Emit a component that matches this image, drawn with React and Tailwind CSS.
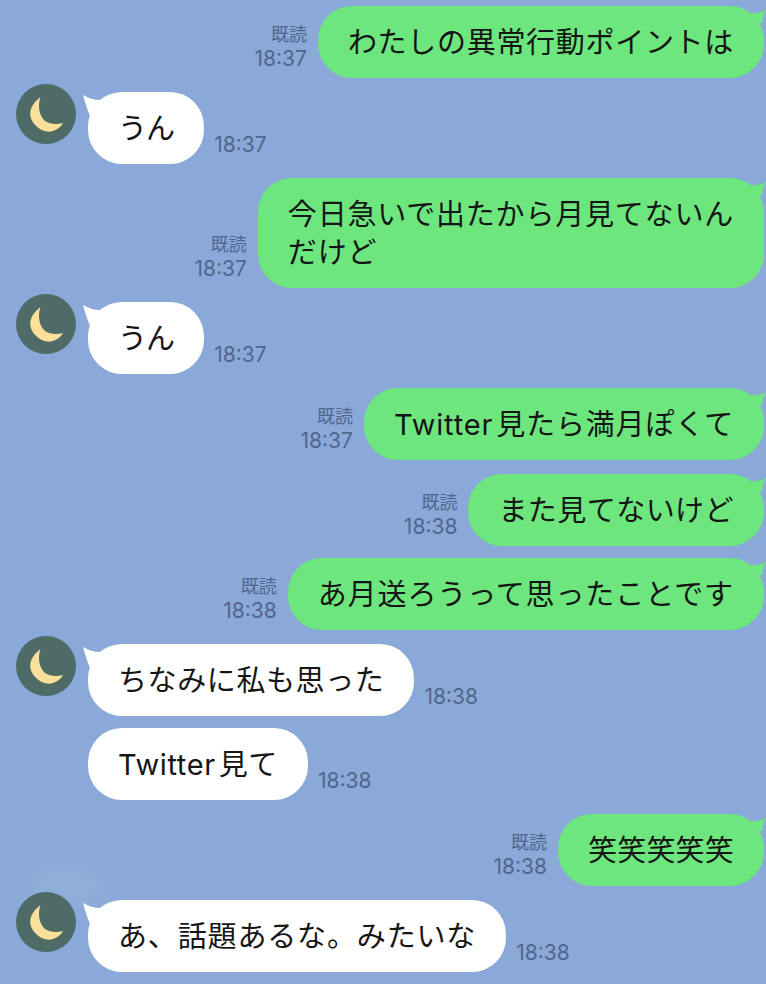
const FONT = "font-['Inter','Noto_Sans_CJK_JP',sans-serif]";

function Moon() {
  return (
    <div className="w-[60px] h-[60px] rounded-full bg-[#4f6b68] shrink-0">
      <svg width="60" height="60" viewBox="0 0 60 60">
        <path d="M24.5 13 C18 18 13 24.5 14.5 32.5 C16.5 42 28 50 37 47 C41 45.8 45 43 47 39 C41 40.5 34 40.5 29 37 C23 32 21.5 21 24.5 13 Z" fill="#fbe09a" />
      </svg>
    </div>
  );
}

function Sent({ text, time, mt, track = "tracking-[0.7px]" }) {
  return (
    <div className={`flex justify-end items-end pr-[2px] ${mt}`}>
      <div className="flex flex-col items-end mr-[11px] pb-[7px] text-[#51668e]">
        <span className="text-[18px] leading-[24px]">既読</span>
        <span className="text-[21px] leading-[24px]">{time}</span>
      </div>
      <div className={`relative bg-[#6de67e] rounded-[34px] pl-[30px] pr-[30px] pt-[18px] pb-[16px] text-[#151515] text-[29px] leading-[38px] ${track}`}>
        {text}
        <svg className="absolute right-[-2px] top-0" width="24" height="24" viewBox="0 0 24 24">
          <path d="M10 7 C14 7.5 19 7 24 4 C22 8 20.5 12 20 17 L6 20 Z" fill="#6de67e" />
        </svg>
      </div>
    </div>
  );
}

function Recv({ text, time, mt, avatar = true, track = "tracking-[0.6px]" }) {
  return (
    <div className={`relative flex items-end pl-[88px] ${mt}`}>
      {avatar && (
        <div className="absolute left-[16px] top-[-8px]">
          <Moon />
        </div>
      )}
      <div className={`relative bg-white rounded-[34px] pl-[30px] pr-[30px] pt-[18px] pb-[16px] text-[#151515] text-[29px] leading-[38px] ${track}`}>
        {text}
        {avatar && (
          <svg className="absolute left-[-8px] top-0" width="30" height="30" viewBox="0 0 30 30">
            <path d="M3 3 C8 6 14 8 21 8 L26 26 L10 24 C7 17 5 10 3 3 Z" fill="#ffffff" />
          </svg>
        )}
      </div>
      <span className="ml-[10px] pb-[7px] text-[#51668e] text-[21px] leading-[24px]">{time}</span>
    </div>
  );
}

export default function App() {
  return (
    <div className={`relative w-[766px] h-[984px] overflow-hidden bg-[#8aa9d8] pt-[6px] ${FONT}`}>
      <div className="absolute left-[20px] top-[865px] w-[90px] h-[40px] rounded-full bg-[#a3bce0] blur-[14px] opacity-30" />
      <div className="relative">
        <Sent text="わたしの異常行動ポイントは" time="18:37" mt="" />
        <Recv text="うん" time="18:37" mt="mt-[14px]" track="tracking-[-0.9px]" />
        <Sent text={<>今日急いで出たから月見てないん<br />だけど</>} time="18:37" mt="mt-[14px]" track="tracking-[0.8px]" />
        <Recv text="うん" time="18:37" mt="mt-[14px]" track="tracking-[-0.9px]" />
        <Sent text={<>Twitter<span className="ml-[3px]">見たら満月ぽくて</span></>} time="18:37" mt="mt-[14px]" track="tracking-[0.83px]" />
        <Sent text="また見てないけど" time="18:38" mt="mt-[14px]" track="tracking-[0.45px]" />
        <Sent text="あ月送ろうって思ったことです" time="18:38" mt="mt-[12px]" track="tracking-[0.9px]" />
        <Recv text="ちなみに私も思った" time="18:38" mt="mt-[14px]" />
        <Recv text={<>Twitter<span className="ml-[3px]">見て</span></>} time="18:38" mt="mt-[12px]" avatar={false} />
        <Sent text="笑笑笑笑笑" time="18:38" mt="mt-[14px]" track="tracking-[0.2px]" />
        <Recv text="あ、話題あるな。みたいな" time="18:38" mt="mt-[14px]" track="tracking-[0.85px]" />
      </div>
    </div>
  );
}
